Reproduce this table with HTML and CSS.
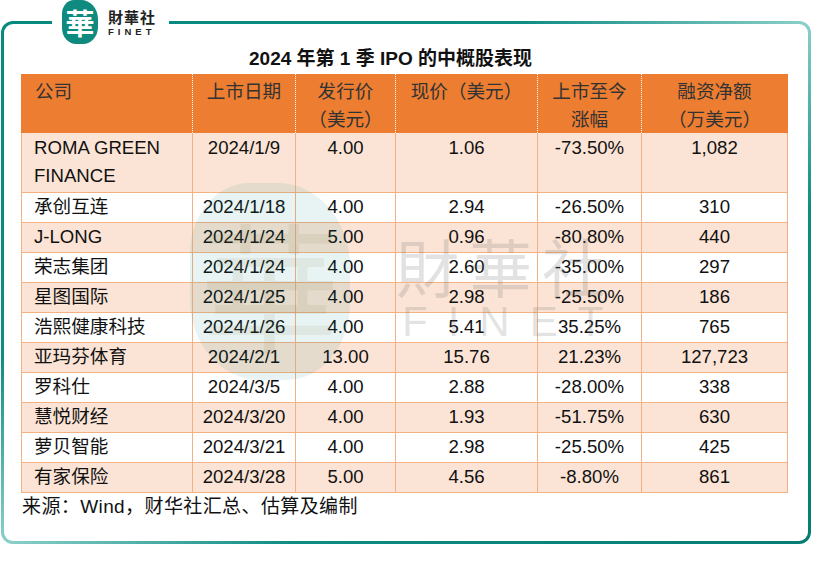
FILE: index.html
```html
<!DOCTYPE html>
<html lang="zh-CN">
<head>
<meta charset="utf-8">
<title>2024 年第 1 季 IPO 的中概股表现</title>
<link rel="stylesheet" href="styles.css">
</head>
<body>
<div class="frame">
  <div class="sheet">
    <div class="wm-mark" aria-hidden="true"></div>
    <div class="wm-text" aria-hidden="true"></div>
    <h1 class="title">2024 年第 1 季 IPO 的中概股表现</h1>
    <div class="grid">
      <div class="row head">
        <div class="th first">公司</div>
        <div class="th">上市日期</div>
        <div class="th">发行价<br>（美元）</div>
        <div class="th">现价（美元）</div>
        <div class="th">上市至今<br>涨幅</div>
        <div class="th last">融资净额<br>（万美元）</div>
      </div>
      <div class="row alt tall">
        <div class="td name">ROMA GREEN<br>FINANCE</div>
        <div class="td">2024/1/9</div>
        <div class="td">4.00</div>
        <div class="td">1.06</div>
        <div class="td">-73.50%</div>
        <div class="td">1,082</div>
      </div>
      <div class="row">
        <div class="td name">承创互连</div>
        <div class="td">2024/1/18</div>
        <div class="td">4.00</div>
        <div class="td">2.94</div>
        <div class="td">-26.50%</div>
        <div class="td">310</div>
      </div>
      <div class="row alt">
        <div class="td name">J-LONG</div>
        <div class="td">2024/1/24</div>
        <div class="td">5.00</div>
        <div class="td">0.96</div>
        <div class="td">-80.80%</div>
        <div class="td">440</div>
      </div>
      <div class="row">
        <div class="td name">荣志集团</div>
        <div class="td">2024/1/24</div>
        <div class="td">4.00</div>
        <div class="td">2.60</div>
        <div class="td">-35.00%</div>
        <div class="td">297</div>
      </div>
      <div class="row alt">
        <div class="td name">星图国际</div>
        <div class="td">2024/1/25</div>
        <div class="td">4.00</div>
        <div class="td">2.98</div>
        <div class="td">-25.50%</div>
        <div class="td">186</div>
      </div>
      <div class="row">
        <div class="td name">浩熙健康科技</div>
        <div class="td">2024/1/26</div>
        <div class="td">4.00</div>
        <div class="td">5.41</div>
        <div class="td">35.25%</div>
        <div class="td">765</div>
      </div>
      <div class="row alt">
        <div class="td name">亚玛芬体育</div>
        <div class="td">2024/2/1</div>
        <div class="td">13.00</div>
        <div class="td">15.76</div>
        <div class="td">21.23%</div>
        <div class="td">127,723</div>
      </div>
      <div class="row">
        <div class="td name">罗科仕</div>
        <div class="td">2024/3/5</div>
        <div class="td">4.00</div>
        <div class="td">2.88</div>
        <div class="td">-28.00%</div>
        <div class="td">338</div>
      </div>
      <div class="row alt">
        <div class="td name">慧悦财经</div>
        <div class="td">2024/3/20</div>
        <div class="td">4.00</div>
        <div class="td">1.93</div>
        <div class="td">-51.75%</div>
        <div class="td">630</div>
      </div>
      <div class="row">
        <div class="td name">萝贝智能</div>
        <div class="td">2024/3/21</div>
        <div class="td">4.00</div>
        <div class="td">2.98</div>
        <div class="td">-25.50%</div>
        <div class="td">425</div>
      </div>
      <div class="row alt">
        <div class="td name">有家保险</div>
        <div class="td">2024/3/28</div>
        <div class="td">5.00</div>
        <div class="td">4.56</div>
        <div class="td">-8.80%</div>
        <div class="td">861</div>
      </div>
    </div>
    <p class="source">来源：Wind，财华社汇总、估算及编制</p>
  </div>
  <div class="logo">
    <div class="logo-mark"><span>華</span></div>
    <div class="logo-text"><span class="logo-cn">財華社</span><span class="logo-en">FINET</span></div>
  </div>
</div>
</body>
</html>
```
FILE: styles.css
```css
* { box-sizing: border-box; }

body {
  margin: 0;
  background: #fff;
  font-family: "Liberation Sans", "Noto Sans CJK SC", sans-serif;
  color: #111;
}

.frame {
  position: relative;
  margin: 21px 0 0 1px;
  width: 810px;
  height: 523px;
  padding: 3px;
  border-radius: 12px;
  background: linear-gradient(to bottom right, #058a80 0%, #0c8c83 32%, #8ccfca 50%, #0c8c83 68%, #057d74 100%);
}

.sheet {
  position: relative;
  height: 100%;
  background: #fff;
  border-radius: 9px;
  padding: 23px 0 0 17px;
  overflow: hidden;
}

/* logo badge over the top border */
.logo {
  position: absolute;
  z-index: 3;
  left: 51px;
  top: -21px;
  width: 117px;
  height: 46px;
  background: #fff;
  display: flex;
  align-items: flex-start;
  gap: 10px;
  padding-left: 10px;
}

.logo-mark {
  width: 36px;
  height: 44px;
  background: #0e8a7e;
  border-radius: 12px 17px 15px 14px / 14px 19px 17px 16px;
  color: #fff;
  font-family: "Noto Sans CJK TC", sans-serif;
  font-weight: bold;
  font-size: 29px;
  line-height: 44px;
  text-align: center;
}

.logo-text {
  display: flex;
  flex-direction: column;
  padding-top: 9px;
}

.logo-cn {
  font-family: "Liberation Sans", "Noto Sans CJK TC", sans-serif;
  font-weight: bold;
  font-size: 15px;
  line-height: 17px;
  color: #222;
  letter-spacing: 1px;
}

.logo-en {
  font-family: "Liberation Sans", sans-serif;
  font-weight: bold;
  font-size: 9.5px;
  line-height: 10px;
  letter-spacing: 4px;
  margin-top: 1px;
  color: #222;
}

.title {
  position: relative;
  margin: 0;
  width: 767px;
  height: 27px;
  padding-right: 28px;
  text-align: center;
  font-size: 19px;
  font-weight: bold;
  line-height: 24px;
  color: #111;
}

.grid {
  display: grid;
  grid-template-columns: 172px 103px 100px 142px 104px 146px;
  width: 767px;
}

.row { display: contents; }

.th {
  height: 59px;
  padding-top: 4px;
  background: #ed7d31;
  border-right: 1px dotted #fff;
  font-size: 18.6px;
  line-height: 27.5px;
  text-align: center;
  color: #333;
}

.th.first {
  border-left: 1px solid #ed7d31;
  text-align: left;
  padding-left: 13px;
}

.th.last { border-right: 1px solid #ed7d31; }

.td {
  height: 30px;
  border-right: 1px solid #f4b183;
  border-bottom: 1px solid #f4b183;
  font-size: 18.6px;
  line-height: 28px;
  text-align: center;
  white-space: nowrap;
  background: #fff;
}

.td.name {
  border-left: 1px solid #f4b183;
  text-align: left;
  padding-left: 12px;
}

.tall .td {
  height: 60px;
  padding-top: 1px;
}

.alt .td { background: #fbe4d5; }

.source {
  margin: 0;
  padding-left: 1px;
  font-size: 19px;
  line-height: 28px;
  letter-spacing: 0.4px;
  color: #111;
}

/* decorative watermark drawn over the table */
.wm-mark,
.wm-text {
  position: absolute;
  z-index: 2;
  pointer-events: none;
}

.wm-mark {
  left: 186px;
  top: 159px;
  width: 160px;
  height: 197px;
  border-radius: 60px 72px 64px 70px / 70px 84px 76px 80px;
  background: rgba(0, 135, 125, 0.09);
}

.wm-mark::before {
  content: "華";
  display: block;
  text-align: center;
  font-family: "Noto Sans CJK TC", sans-serif;
  font-size: 140px;
  line-height: 197px;
  color: rgba(120, 100, 60, 0.09);
}

.wm-text {
  left: 392px;
  top: 204px;
  width: 240px;
  color: rgba(110, 110, 110, 0.2);
}

.wm-text::before {
  content: "財華社";
  display: block;
  font-family: "Noto Sans CJK TC", sans-serif;
  font-size: 63px;
  line-height: 74px;
  letter-spacing: 10px;
}

.wm-text::after {
  content: "FINET";
  display: block;
  font-family: "Liberation Sans", sans-serif;
  font-size: 42px;
  line-height: 40px;
  letter-spacing: 20px;
  padding-left: 6px;
}
```
